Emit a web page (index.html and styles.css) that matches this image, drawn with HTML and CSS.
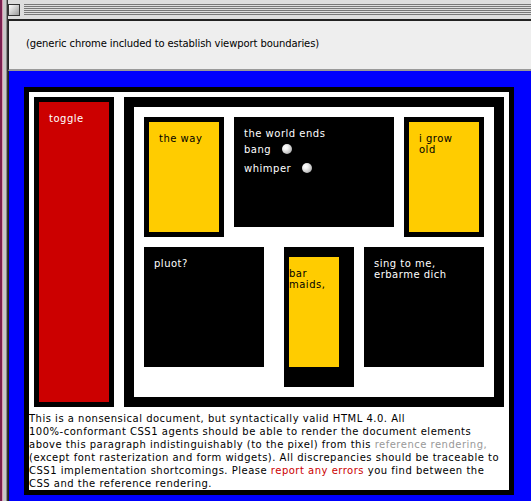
FILE: index.html
```html
<!DOCTYPE html>
<html>
<head>
<meta charset="utf-8">
<title>CSS1 test</title>
<link rel="stylesheet" href="styles.css">
</head>
<body>
<div class="window">
  <div class="desk"></div>
  <div class="frame">
    <div class="titlebar"><span class="closebox"></span><span class="stripes"></span></div>
    <div class="chrome"><p class="chrome-text">(generic chrome included to establish viewport boundaries)</p></div>
    <div class="viewport">
      <div class="acid">
        <div class="dl">
          <div class="dt">toggle</div>
          <div class="dd">
            <div class="row">
              <div class="li">the way</div>
              <div class="bar">
                <p class="line">the world ends</p>
                <form class="form" action="./" method="get">
                  <p class="fline">bang<input class="radio" type="radio" name="foo" value="off"></p>
                  <p class="fline">whimper<input class="radio" type="radio" name="foo2" value="on"></p>
                </form>
              </div>
              <div class="li">i grow<br>old</div>
            </div>
            <div class="row row2">
              <div class="baz">pluot?</div>
              <div class="bq">bar<br>maids,</div>
              <h1 class="h1">sing to me,<br>erbarme dich</h1>
            </div>
          </div>
        </div>
        <p class="note">This is a nonsensical document, but syntactically valid HTML 4.0. All<br>100%-conformant CSS1 agents should be able to render the document elements<br>above this paragraph indistinguishably (to the pixel) from this <a class="ref" href="#">reference rendering,</a><br>(except font rasterization and form widgets). All discrepancies should be traceable to<br>CSS1 implementation shortcomings. Please <a class="err" href="#">report any errors</a> you find between the<br>CSS and the reference rendering.</p>
      </div>
    </div>
  </div>
</div>
</body>
</html>
```
FILE: styles.css
```css
html, body {
  margin: 0;
  padding: 0;
}
body {
  width: 531px;
  height: 501px;
  overflow: hidden;
  font-family: "DejaVu Sans", Verdana, sans-serif;
  background: #0000ff;
}
.window {
  display: flex;
  height: 501px;
}
.desk {
  flex: none;
  width: 8px;
  background: linear-gradient(to right, #7a2050 0 2px, #d898b0 2px 3px, #c8c8c8 3px 6px, #8a8a8a 6px 7px, #333 7px 8px);
}
.frame {
  flex: 1;
  min-width: 0;
  display: flex;
  flex-direction: column;
}
.titlebar {
  flex: none;
  height: 19px;
  display: flex;
  align-items: center;
  gap: 4px;
  background: #dddddd;
}
.closebox {
  flex: none;
  width: 10px;
  height: 10px;
  border: 1px solid #333;
  background: linear-gradient(135deg, #ffffff, #9a9a9a);
}
.stripes {
  flex: 1;
  height: 11px;
  background: repeating-linear-gradient(to bottom, #777 0 1px, #dddddd 1px 2px);
}
.chrome {
  flex: none;
  height: 48px;
  border-top: 2px solid #222;
  border-left: 1px solid #222;
  border-bottom: 2px solid #9a9a9a;
  background: #eeeeee;
  padding-left: 17px;
}
.chrome-text {
  margin: 0;
  padding-top: 16px;
  font-size: 10px;
  line-height: 13px;
  letter-spacing: -0.1px;
  color: #000;
}
.viewport {
  flex: 1;
  border-left: 1px solid #222;
  background: #0000ff;
  padding: 16px 15px 15px 15px;
}
.acid {
  width: 480px;
  border: 5px solid #000;
  background: #fff;
  font-size: 10px;
  line-height: 11px;
  letter-spacing: 0.5px;
  color: #fff;
}
.dl {
  display: flex;
  justify-content: space-between;
  padding: 5px;
}
.dt {
  background: #cc0000;
  border: 5px solid #000;
  padding: 11px 10px 10px;
  width: 50px;
  height: 279px;
}
.dd {
  border: 10px solid #000;
  padding: 10px;
  width: 340px;
  height: 270px;
  display: flex;
  flex-direction: column;
}
.row {
  display: flex;
  align-items: flex-start;
}
.row2 {
  margin-top: 10px;
}
.li {
  color: #000;
  background: #ffcc00;
  border: 5px solid #000;
  padding: 11px 10px 10px;
  width: 50px;
  height: 89px;
}
.bar {
  background: #000;
  color: #fff;
  margin: 0 10px;
  padding: 11px 10px 10px;
  width: 140px;
  height: 89px;
}
.line {
  margin: 0;
}
.form {
  margin: 0;
}
.fline {
  margin: 0;
  line-height: 19px;
}
.fline:first-child {
  margin-top: 1px;
}
.radio {
  appearance: none;
  -webkit-appearance: none;
  width: 10px;
  height: 10px;
  margin: 0 0 0 11px;
  padding: 0;
  border: 0;
  border-radius: 50%;
  vertical-align: -1px;
  background: radial-gradient(circle at 35% 35%, #ffffff 0, #f2f2f2 25%, #c8c8c8 60%, #8c8c8c 100%);
}
.baz {
  background: #000;
  color: #fff;
  padding: 11px 10px 10px;
  width: 100px;
  height: 99px;
}
.bq {
  margin-left: 20px;
  border-style: solid;
  border-color: #000;
  border-width: 10px 15px 20px 5px;
  padding: 11px 0 10px;
  width: 50px;
  height: 89px;
  background: #ffcc00;
  color: #000;
}
.h1 {
  margin: 0 0 0 10px;
  background: #000;
  color: #fff;
  padding: 11px 10px 10px;
  width: 100px;
  height: 99px;
  font-size: 10px;
  line-height: 11px;
  font-weight: normal;
}
.note {
  margin: 0;
  color: #000;
  line-height: 13px;
  white-space: nowrap;
}
.ref {
  color: #999999;
  text-decoration: none;
}
.err {
  color: #cc0000;
  text-decoration: none;
}
```
